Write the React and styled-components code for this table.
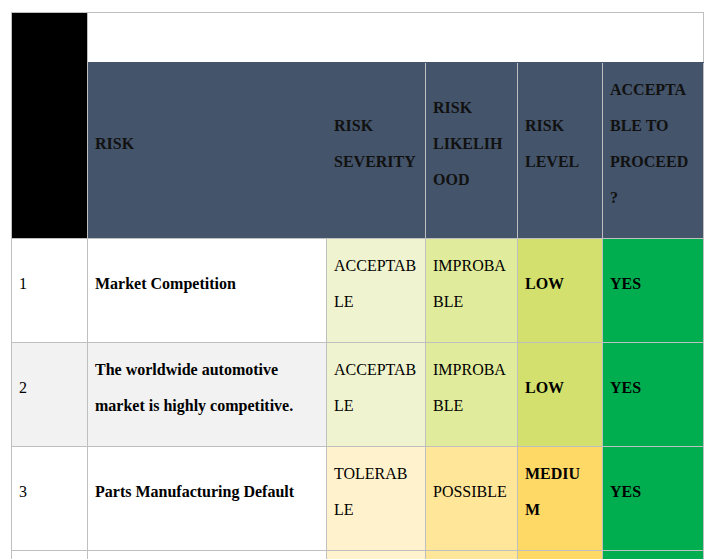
import React from 'react';
import styled, { createGlobalStyle } from 'styled-components';

const GlobalStyle = createGlobalStyle`
  html, body {
    margin: 0;
    padding: 0;
    background: #ffffff;
  }
  body {
    font-family: "Liberation Serif", "Times New Roman", serif;
    color: #000000;
  }
`;

const colors = {
  line: '#bfbfbf',
  head: '#44546a',
  stripe: '#f2f2f2',
  acceptable: '#eff3d0',
  improbable: '#e1eb9c',
  low: '#d3e06d',
  tolerable: '#fff2cc',
  possible: '#ffe699',
  medium: '#ffd966',
  yes: '#00ae50',
};

// zero-width space keeps the word break where the sheet put it
const TOLERABLE = 'TOLERAB\u200BLE';

const rows = [
  {
    no: '1',
    risk: 'Market Competition',
    severity: ['ACCEPTABLE', colors.acceptable],
    likelihood: ['IMPROBABLE', colors.improbable],
    level: ['LOW', colors.low],
    proceed: 'YES',
  },
  {
    no: '2',
    risk: 'The worldwide automotive market is highly competitive.',
    stripe: true,
    severity: ['ACCEPTABLE', colors.acceptable],
    likelihood: ['IMPROBABLE', colors.improbable],
    level: ['LOW', colors.low],
    proceed: 'YES',
  },
  {
    no: '3',
    risk: 'Parts Manufacturing Default',
    severity: [TOLERABLE, colors.tolerable],
    likelihood: ['POSSIBLE', colors.possible],
    level: ['MEDIUM', colors.medium],
    proceed: 'YES',
  },
  {
    no: '4',
    risk: 'Supply Chain Delay',
    severity: [TOLERABLE, colors.tolerable],
    likelihood: ['POSSIBLE', colors.possible],
    level: ['MEDIUM', colors.medium],
    proceed: 'YES',
  },
];

const App = () => {
  return (
    <>
      <GlobalStyle />
      <Table>
        <colgroup>
          <col style={{ width: 76 }} />
          <col style={{ width: 239 }} />
          <col style={{ width: 99 }} />
          <col style={{ width: 92 }} />
          <col style={{ width: 85 }} />
          <col style={{ width: 101 }} />
        </colgroup>
        <thead>
          <tr>
            <Corner rowSpan={2} />
            <TitleCell colSpan={5} />
          </tr>
          <tr>
            <HeadCell $joined>
              <Para>RISK</Para>
            </HeadCell>
            <HeadCell>
              <Para>RISK SEVERITY</Para>
            </HeadCell>
            <HeadCell>
              <Para>RISK LIKELIHOOD</Para>
            </HeadCell>
            <HeadCell>
              <Para>RISK LEVEL</Para>
            </HeadCell>
            <HeadCell>
              <Para>ACCEPTABLE TO PROCEED?</Para>
            </HeadCell>
          </tr>
        </thead>
        <tbody>
          {rows.map((row) => (
            <tr key={row.no}>
              <Cell $bg={row.stripe ? colors.stripe : '#ffffff'}>
                <Para>{row.no}</Para>
              </Cell>
              <Cell $bg={row.stripe ? colors.stripe : '#ffffff'} $bold>
                <Para>{row.risk}</Para>
              </Cell>
              <Cell $bg={row.severity[1]}>
                <Para>{row.severity[0]}</Para>
              </Cell>
              <Cell $bg={row.likelihood[1]}>
                <Para>{row.likelihood[0]}</Para>
              </Cell>
              <Cell $bg={row.level[1]} $bold>
                <Para>{row.level[0]}</Para>
              </Cell>
              <Cell $bg={colors.yes} $bold>
                <Para>{row.proceed}</Para>
              </Cell>
            </tr>
          ))}
        </tbody>
      </Table>
    </>
  );
};

export default App;

const Table = styled.table`
  margin: 12px 0 0 11px;
  width: 693px;
  table-layout: fixed;
  border-collapse: collapse;
  font-size: 16px;
`;

const Para = styled.p`
  margin: 0 0 14px;
  line-height: 36px;
  overflow-wrap: anywhere;
`;

const Cell = styled.td`
  border: 1px solid ${colors.line};
  padding: 8.5px 7px;
  vertical-align: middle;
  text-align: left;
  background: ${(props) => props.$bg};
  font-weight: ${(props) => (props.$bold ? 700 : 400)};
`;

const HeadCell = styled.th`
  border: 1px solid ${colors.line};
  border-right-color: ${(props) => (props.$joined ? colors.head : colors.line)};
  padding: 8.5px 7px;
  vertical-align: middle;
  text-align: left;
  background: ${colors.head};
  color: #111111;
  font-weight: 700;
`;

const Corner = styled.th`
  border: 1px solid ${colors.line};
  background: #000000;
  padding: 0;
`;

const TitleCell = styled.th`
  border: 1px solid ${colors.line};
  border-bottom-color: ${colors.head};
  background: #ffffff;
  height: 49px;
  padding: 0;
`;
